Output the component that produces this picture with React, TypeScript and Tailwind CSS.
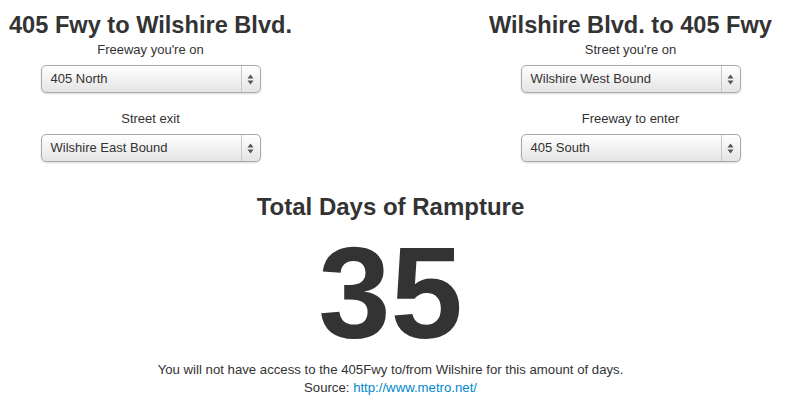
const font = { fontFamily: '"Liberation Sans", Arial, Helvetica, sans-serif' };

function Select({ value }: { value: string }) {
  return (
    <div className="relative flex h-[28px] w-[220px] items-center rounded-[5px] border border-[#aaa] bg-gradient-to-b from-white to-[#e4e4e4] shadow-[0_1px_2px_rgba(0,0,0,0.15)]">
      <span className="flex-1 pl-[9px] text-[13px] text-[#333]">{value}</span>
      <div className="flex h-full w-[19px] items-center justify-center border-l border-[#c8c8c8]">
        <svg width="7" height="11" viewBox="0 0 7 11">
          <path d="M3.5 0.5 L6.5 4.5 L0.5 4.5 Z" fill="#555" />
          <path d="M3.5 10.5 L6.5 6.5 L0.5 6.5 Z" fill="#555" />
        </svg>
      </div>
    </div>
  );
}

function Column({ title, first, firstValue, second, secondValue }: {
  title: string;
  first: string;
  firstValue: string;
  second: string;
  secondValue: string;
}) {
  return (
    <div className="flex w-[301px] flex-col items-center">
      <h2 className="whitespace-nowrap text-[23.6px] font-bold leading-[30px] text-[#333]">{title}</h2>
      <label className="mt-[1px] text-[13px] leading-[18px] text-[#333]">{first}</label>
      <div className="mt-[6px]">
        <Select value={firstValue} />
      </div>
      <label className="mt-[17px] text-[13px] leading-[18px] text-[#333]">{second}</label>
      <div className="mt-[6px]">
        <Select value={secondValue} />
      </div>
    </div>
  );
}

export default function App() {
  return (
    <div className="h-[405px] w-[791px] overflow-hidden bg-white" style={font}>
      <div className="w-[781px] pt-[10px]">
        <div className="flex justify-between">
          <Column
            title="405 Fwy to Wilshire Blvd."
            first="Freeway you're on"
            firstValue="405 North"
            second="Street exit"
            secondValue="Wilshire East Bound"
          />
          <Column
            title="Wilshire Blvd. to 405 Fwy"
            first="Street you're on"
            firstValue="Wilshire West Bound"
            second="Freeway to enter"
            secondValue="405 South"
          />
        </div>

        {/* Total */}
        <div className="mt-[30px] flex flex-col items-center text-[#333]">
          <h1 className="text-[24px] font-bold leading-[30px]">Total Days of Rampture</h1>
          <div className="mt-[6px] text-[130px] font-bold leading-[130px]">35</div>
          <p className="mt-[3px] text-[13.2px] leading-[18px]">
            You will not have access to the 405Fwy to/from Wilshire for this amount of days.
          </p>
          <p className="text-[13.2px] leading-[18px]">
            Source: <a href="#" className="text-[#0088cc]">http://www.metro.net/</a>
          </p>
        </div>
      </div>
    </div>
  );
}
